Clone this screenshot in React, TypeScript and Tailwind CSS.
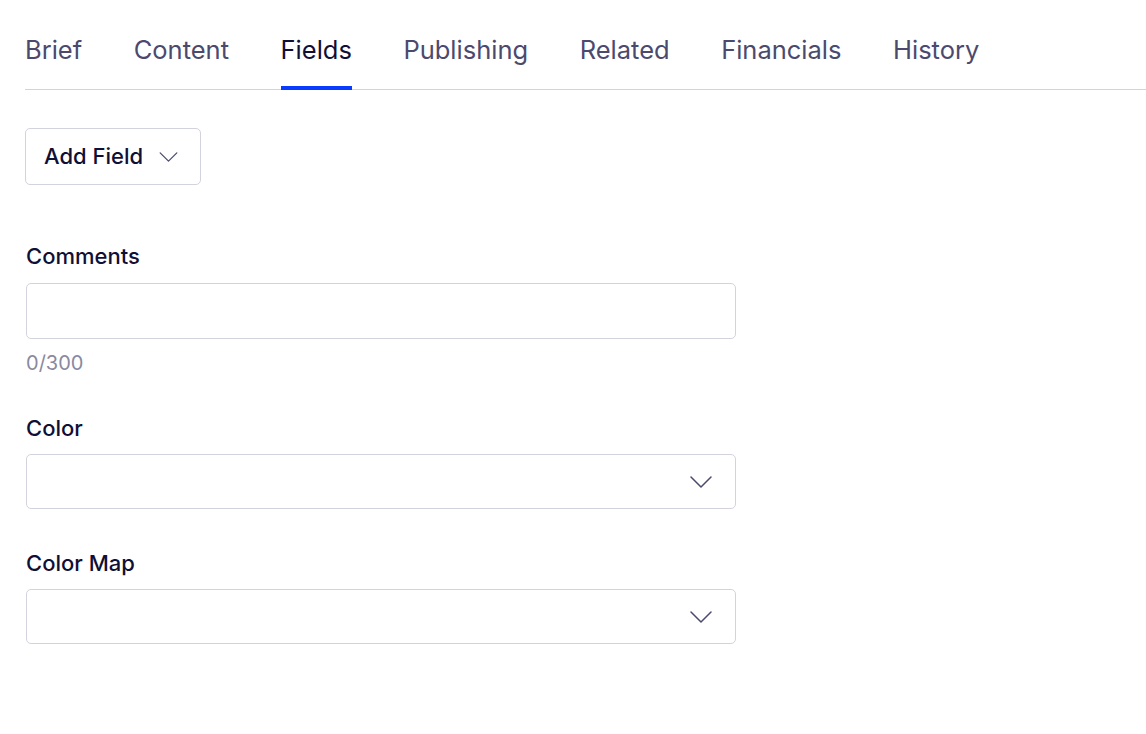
import { useState } from "react";

const TABS = ["Brief", "Content", "Fields", "Publishing", "Related", "Financials", "History"];

function Chevron({ className }: { className?: string }) {
  return (
    <svg viewBox="0 0 22 12" fill="none" className={className}>
      <path d="M1 1l10 10L21 1" stroke="currentColor" strokeWidth="1.5" strokeLinecap="round" strokeLinejoin="round" />
    </svg>
  );
}

function SelectField({ label }: { label: string }) {
  return (
    <div className="flex flex-col">
      <label className="text-[22px] leading-[28px] font-medium text-[#100f36]">{label}</label>
      <button className="mt-[12px] h-[55px] w-[710px] rounded-[5px] border border-[#d3d3dd] bg-white flex items-center justify-end pr-[23px]">
        <Chevron className="w-[22px] h-[12px] text-[#4b4a6e]" />
      </button>
    </div>
  );
}

export default function App() {
  const [active, setActive] = useState("Fields");
  const [comment, setComment] = useState("");

  return (
    <div className="min-h-screen bg-white pl-[25px] font-['Inter',sans-serif]">
      <nav className="flex gap-[51.5px] border-b border-[#d3d3dd]">
        {TABS.map((tab) => (
          <button
            key={tab}
            onClick={() => setActive(tab)}
            className={
              tab === active
                ? "-mb-px pt-[34px] pb-[20px] border-b-4 border-[#0a3cff] text-[25.5px] leading-[32px] text-[#100f36]"
                : "-mb-px pt-[34px] pb-[20px] border-b-4 border-transparent text-[25.5px] leading-[32px] text-[#4b4a6e]"
            }
          >
            {tab}
          </button>
        ))}
      </nav>

      <button className="mt-[38px] h-[57px] w-[176px] rounded-[5px] border border-[#d3d3dd] flex items-center pl-[18px] gap-[16px] text-[22px] font-medium text-[#100f36]">
        Add Field
        <Chevron className="w-[19px] h-[10px] text-[#4b4a6e]" />
      </button>

      <div className="mt-[57px] flex flex-col pl-px">
        <label className="text-[22px] leading-[28px] font-medium text-[#100f36]">Comments</label>
        <input
          value={comment}
          maxLength={300}
          onChange={(e) => setComment(e.target.value)}
          className="mt-[13px] h-[56px] w-[710px] rounded-[5px] border border-[#d3d3dd] px-4 text-[20px] outline-none"
        />
        <span className="mt-[10px] text-[20px] leading-[28px] text-[#8a89a0]">{comment.length}/300</span>

        <div className="mt-[37px]">
          <SelectField label="Color" />
        </div>
        <div className="mt-[40px]">
          <SelectField label="Color Map" />
        </div>
      </div>
    </div>
  );
}
